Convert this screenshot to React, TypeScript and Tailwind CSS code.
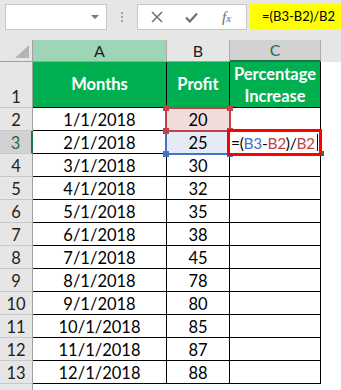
import React from "react";

const months = ["1/1/2018","2/1/2018","3/1/2018","4/1/2018","5/1/2018","6/1/2018","7/1/2018","8/1/2018","9/1/2018","10/1/2018","11/1/2018","12/1/2018"];
const profits = [20,25,30,32,35,38,45,78,80,85,87,88];

function Handle({ cls }: { cls: string }) {
  return <div className={`absolute w-[6px] h-[6px] ${cls}`} />;
}

export default function App() {
  return (
    <div className="w-[341px] h-[390px] bg-white overflow-hidden relative" style={{ fontFamily: "Lato, 'Open Sans', sans-serif" }}>
      {/* toolbar */}
      <div className="h-[40px] bg-[#e6e6e6] flex items-start pt-[4px]">
        <div className="ml-[5px] w-[102px] h-[26px] bg-white border border-[#c6c6c6] flex items-center justify-end pr-[7px]">
          <div className="w-0 h-0 border-l-[4px] border-r-[4px] border-t-[4px] border-l-transparent border-r-transparent border-t-[#777]" />
        </div>
        <div className="w-[30px] h-[26px] flex flex-col items-center justify-center gap-[2px]">
          <div className="w-[2px] h-[2px] bg-[#a0a0a0]" />
          <div className="w-[2px] h-[2px] bg-[#a0a0a0]" />
          <div className="w-[2px] h-[2px] bg-[#a0a0a0]" />
        </div>
        <div className="w-[110px] h-[26px] bg-white border border-[#c6c6c6] flex items-center">
          <svg className="ml-[13px]" width="12" height="12" viewBox="0 0 12 12">
            <path d="M1 1 L11 11 M11 1 L1 11" stroke="#6e6e6e" strokeWidth="1.5" />
          </svg>
          <svg className="ml-[22px]" width="13" height="11" viewBox="0 0 13 11">
            <path d="M1 5.5 L4.8 9.5 L12 1.5" stroke="#6e6e6e" strokeWidth="2.2" fill="none" />
          </svg>
          <span className="ml-[24px] text-[#6e6e6e] italic text-[15px] leading-none" style={{ fontFamily: "'Liberation Serif', serif" }}>
            f<span className="text-[11px]">x</span>
          </span>
        </div>
        <div className="ml-[3px] flex-1 h-[26px] bg-[#ffff00] flex items-center pl-[12px] text-[13px] text-black whitespace-nowrap">
          =(B3-B2)/B2
        </div>
      </div>

      {/* column headers */}
      <div className="flex h-[22px] bg-[#e6e6e6]">
        <div className="w-[33px] h-full border-b border-r border-[#a0a0a0] flex items-end justify-end pr-[3px] pb-[3px]">
          <svg width="14" height="13" viewBox="0 0 14 13">
            <path d="M14 0 L14 13 L0 13 Z" fill="#b4b4b4" />
          </svg>
        </div>
        <div className="w-[134px] h-full bg-[#9fd5b7] border-b border-r border-b-[#a0a0a0] border-r-[#ababab] flex items-center justify-center text-[16px] text-[#222]">A</div>
        <div className="w-[63px] h-full border-b border-r border-b-[#a0a0a0] border-r-[#ababab] flex items-center justify-center text-[16px] text-[#222]">B</div>
        <div className="w-[91px] h-full bg-[#d2d2d2] border-b-2 border-r border-b-[#217346] border-r-[#ababab] flex items-center justify-center text-[16px] text-[#1e6b45]">C</div>
        <div className="flex-1 h-full" />
      </div>

      {/* row 1 */}
      <div className="flex h-[46px]">
        <div className="w-[33px] h-full bg-[#e6e6e6] border-b border-r border-b-[#c8c8c8] border-r-[#a0a0a0] flex items-end justify-center pb-[1px] text-[16.5px] leading-[18px] text-[#222]">1</div>
        <div className="w-[134px] h-full bg-[#00b050] border-b border-r border-black flex items-center justify-center text-white font-bold text-[16.5px]">Months</div>
        <div className="w-[63px] h-full bg-[#00b050] border-b border-r border-black flex items-center justify-center text-white font-bold text-[16.5px]">Profit</div>
        <div className="w-[91px] h-full bg-[#00b050] border-b border-r border-black flex flex-col items-center justify-center text-white font-bold text-[16.5px] leading-[22px] pt-[1px] whitespace-nowrap">
          <span>Percentage</span>
          <span>Increase</span>
        </div>
        <div className="flex-1 h-full" />
      </div>

      {months.map((m, i) => {
        const row = i + 2;
        const sel = row === 3;
        const bFill = row === 2 ? "bg-[#f2dcdb]" : row === 3 ? "bg-[#e4ebf7]" : "";
        return (
          <div key={m} className="flex h-[23px]">
            <div className={`w-[33px] h-full border-b border-b-[#c8c8c8] flex items-end justify-center pb-[1px] text-[16.5px] leading-[18px] ${sel ? "bg-[#d2d2d2] border-r-2 border-r-[#217346] text-[#1e6b45]" : "bg-[#e6e6e6] border-r border-r-[#a0a0a0] text-[#222]"}`}>{row}</div>
            <div className="w-[134px] h-full border-b border-r border-black flex items-end justify-center pb-[1px] text-[16.5px] leading-[18px] text-black">{m}</div>
            <div className={`w-[63px] h-full border-b border-r border-black flex items-end justify-center pb-[1px] text-[16.5px] leading-[18px] text-black ${bFill}`}>{profits[i]}</div>
            <div className="w-[91px] h-full border-b border-r border-black" />
            <div className="flex-1 h-full" />
          </div>
        );
      })}

      {/* partial row 14 */}
      <div className="flex h-[6px]">
        <div className="w-[33px] h-full bg-[#e6e6e6] border-r border-r-[#a0a0a0]" />
        <div className="flex-1" />
      </div>

      {/* B3 blue reference box */}
      <div className="absolute left-[165px] top-[130px] w-[66px] h-[25px] border-l-2 border-b-2 border-[#4472c4]" />
      <Handle cls="left-[163px] top-[151px] bg-[#4472c4]" />
      <Handle cls="left-[227px] top-[151px] bg-[#4472c4]" />

      {/* B2 red reference box */}
      <div className="absolute left-[165px] top-[107px] w-[66px] h-[25px] border-2 border-[#c0414b]" />
      <Handle cls="left-[163px] top-[105px] bg-[#c0414b]" />
      <Handle cls="left-[227px] top-[105px] bg-[#c0414b]" />
      <Handle cls="left-[163px] top-[128px] bg-[#c0414b]" />
      <Handle cls="left-[227px] top-[128px] bg-[#c0414b]" />

      {/* C3 edit box */}
      <div className="absolute left-[227px] top-[129px] w-[95px] h-[27px] border-[3px] border-[#ff0000] bg-white flex items-end pb-[1px] pl-[1px] text-[15.5px] tracking-[-0.3px] leading-[18px] text-black whitespace-nowrap">
        <span>=(</span>
        <span className="text-[#4472c4]">B3</span>
        <span>-</span>
        <span className="text-[#c0414b]">B2</span>
        <span>)/</span>
        <span className="text-[#c0414b]">B2</span>
        <span className="ml-[2px] w-[1px] h-[17px] bg-black self-end mb-[1px]" />
      </div>
      <div className="absolute left-[321px] top-[151px] w-[3px] h-[5px] bg-[#217346]" />
    </div>
  );
}
